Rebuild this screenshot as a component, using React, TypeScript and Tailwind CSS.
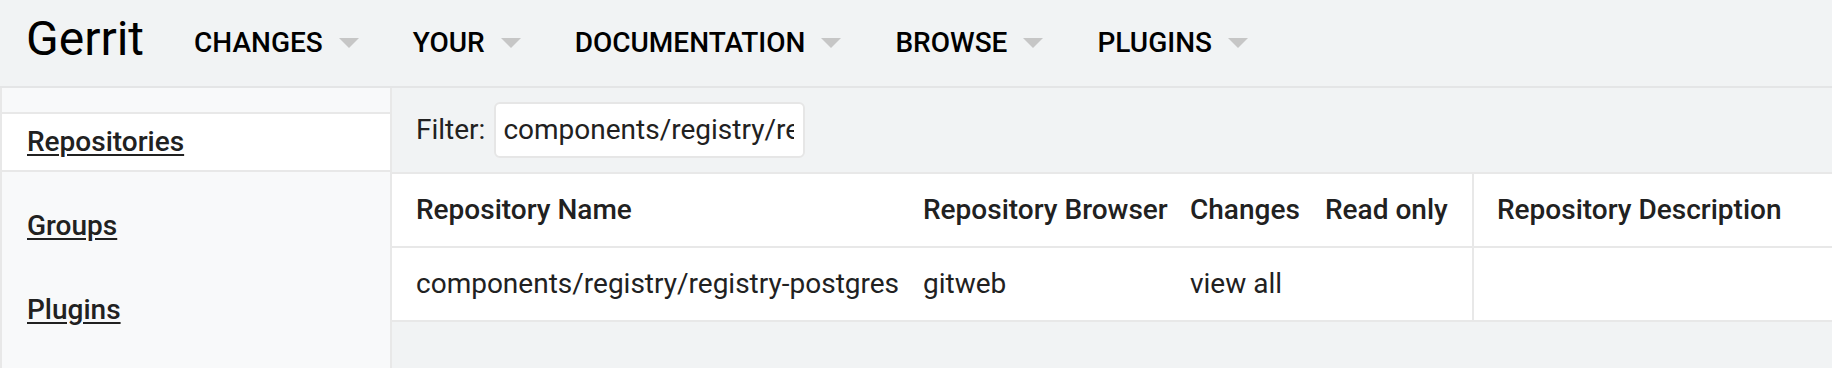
import React from 'react';

const navItems = ['Changes', 'Your', 'Documentation', 'Browse', 'Plugins'];

const sideLinks = [
  { name: 'Repositories', selected: true },
  { name: 'Groups', selected: false },
  { name: 'Plugins', selected: false },
];

const Caret: React.FC = () => (
  <svg width="20" height="10" viewBox="0 0 20 10" className="shrink-0">
    <path d="M0 0 L20 0 L10 10 Z" fill="#c6c6c6" />
  </svg>
);

const App: React.FC = () => {
  return (
    <div className="h-[368px] w-full overflow-hidden bg-[#f1f3f4] font-['Roboto','Liberation_Sans',sans-serif] text-[#212121]">
      {/* Header */}
      <header className="flex h-[88px] items-center border-b-2 border-[#e4e5e6] bg-[#f1f3f4] pl-[26px] text-black">
        <span className="-mt-2 text-[48px] leading-none">Gerrit</span>
        <nav className="ml-[50px] flex items-center gap-[54px]">
          {navItems.map((item) => (
            <div key={item} className="flex items-center gap-[16px]">
              <span className="text-[28px] font-medium uppercase leading-none">{item}</span>
              <Caret />
            </div>
          ))}
        </nav>
      </header>

      <div className="flex h-[280px]">
        {/* Sidebar */}
        <aside className="flex w-[392px] shrink-0 flex-col gap-[24px] border-x-2 border-[#e8e8e8] bg-[#f8f9fa] pt-[24px]">
          {sideLinks.map((link) => (
            <a
              key={link.name}
              href="#"
              className={`flex h-[60px] items-center border-y-2 pl-[25px] text-[28px] font-medium underline underline-offset-[3px] ${
                link.selected ? 'border-[#e8e8e8] bg-white' : 'border-transparent'
              }`}
            >
              {link.name}
            </a>
          ))}
        </aside>

        {/* Main */}
        <main className="flex min-w-0 flex-1 flex-col">
          <div className="flex h-[84px] items-center pl-[24px]">
            <label className="text-[28px]">Filter:</label>
            <div className="ml-[9px] flex h-[56px] w-[311px] items-center rounded-[6px] border-2 border-[#e6e6e6] bg-white pl-[7px] pr-[9px]">
              <div className="min-w-0 flex-1 overflow-hidden">
                <span className="whitespace-nowrap text-[28px]">components/registry/registry-postgres</span>
              </div>
            </div>
          </div>

          <div className="border-t-2 border-[#e8e8e8] bg-white whitespace-nowrap">
            <div className="flex h-[74px] items-center border-b-2 border-[#e8e8e8] text-[28px] font-medium">
              <div className="flex h-full w-[507px] shrink-0 items-center pl-[24px]">Repository Name</div>
              <div className="flex h-full w-[267px] shrink-0 items-center pl-[24px]">Repository Browser</div>
              <div className="flex h-full w-[135px] shrink-0 items-center pl-[24px]">Changes</div>
              <div className="flex h-full w-[173px] shrink-0 items-center border-r-2 border-[#e8e8e8] pl-[24px]">Read only</div>
              <div className="flex h-full flex-1 items-center pl-[23px]">Repository Description</div>
            </div>
            <div className="flex h-[74px] items-center border-b-2 border-[#e8e8e8] text-[28px]">
              <div className="flex h-full w-[507px] shrink-0 items-center pl-[24px]">components/registry/registry-postgres</div>
              <div className="flex h-full w-[267px] shrink-0 items-center pl-[24px]">gitweb</div>
              <div className="flex h-full w-[135px] shrink-0 items-center pl-[24px]">view all</div>
              <div className="flex h-full w-[173px] shrink-0 items-center border-r-2 border-[#e8e8e8] pl-[24px]"></div>
              <div className="flex h-full flex-1 items-center pl-[23px]"></div>
            </div>
          </div>
        </main>
      </div>
    </div>
  );
};

export default App;
